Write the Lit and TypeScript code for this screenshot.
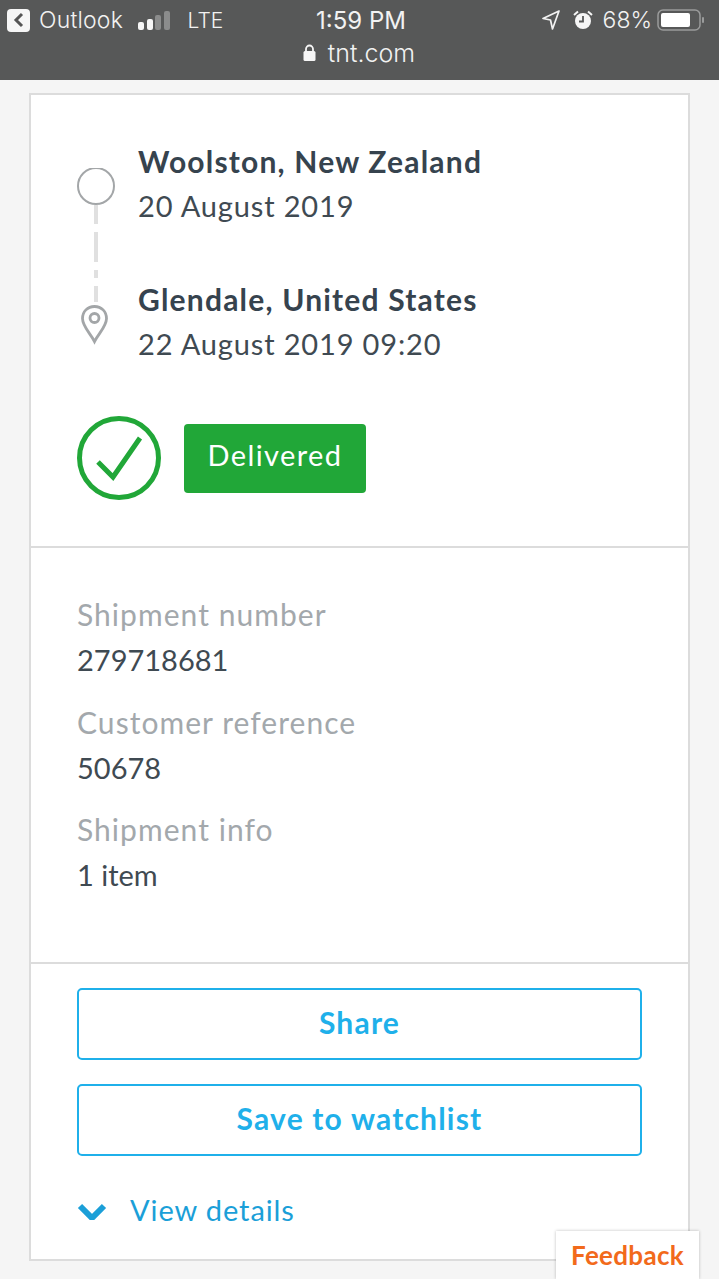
import { LitElement, html, css } from "lit";
import { customElement } from "lit/decorators.js";

@customElement("app-root")
export class AppRoot extends LitElement {
  static styles = css`
    :host { display: block; position: relative; width: 719px; height: 1279px; overflow: hidden; background: #f5f5f5; font-family: Lato, "Open Sans", sans-serif; color: #36434e; }
    * { box-sizing: border-box; }
    .top { height: 80px; background: #575858; color: #f2f2f2; padding: 0 7px; display: flex; flex-direction: column; }
    .status { height: 40px; display: flex; align-items: center; font-size: 23px; font-family: Inter, Lato, sans-serif; font-weight: 300; }
    .left, .right { display: flex; align-items: center; }
    .left { flex: 1; }
    .right { flex: 1; justify-content: flex-end; padding-right: 7px; }
    .back { width: 23px; height: 23px; background: #f6f6f6; border-radius: 4px; display: flex; align-items: center; justify-content: center; margin-right: 9px; }
    .app { font-size: 23px; letter-spacing: 0.2px; }
    .signal { display: flex; align-items: flex-end; gap: 2.5px; margin-left: 15px; height: 20px; }
    .signal i { display: block; width: 6px; border-radius: 2px; background: #f6f6f6; }
    .signal i.off { background: #8b8c8c; }
    .s1 { height: 8px; } .s2 { height: 11px; } .s3 { height: 15px; } .s4 { height: 19px; }
    .lte { margin-left: 18px; font-size: 21px; }
    .time { font-size: 24px; font-weight: 400; flex: none; margin-left: 10px; }
    .pct { font-size: 23px; margin: 0 5px 0 10px; }
    .alarm { margin-left: 13px; }
    .url { height: 24px; margin-top: 1px; display: flex; align-items: center; justify-content: center; gap: 12px; font-size: 25px; font-family: Inter, Lato, sans-serif; font-weight: 300; padding-right: 1px; }
    .card { position: absolute; left: 29px; top: 93px; width: 661px; height: 1168px; background: #fff; border: 2px solid #dcdcdc; display: flex; flex-direction: column; }
    .route { height: 453px; border-bottom: 2px solid #dcdcdc; padding: 46px 46px 0; }
    .stops { display: grid; grid-template-columns: 38px 1fr; grid-template-rows: 137.5px 1fr; column-gap: 23px; height: 277px; }
    .rail { display: flex; flex-direction: column; align-items: center; grid-row: span 2; width: 38px; padding-top: 27px; height: 277px; }
    .info { margin-top: -2px; }
    .place { font-size: 30px; font-weight: 700; line-height: 45px; letter-spacing: 1.2px; }
    .date { font-size: 29px; font-weight: 400; line-height: 44px; color: #3f4a52; letter-spacing: 0.85px; }
    .status-row { display: flex; align-items: center; gap: 23px; margin-top: -2px; }
    .badge { width: 182px; height: 69px; border-radius: 4px; background: #21a738; color: #fff; font-size: 29px; font-weight: 400; display: flex; align-items: center; justify-content: center; letter-spacing: 1.4px; padding-bottom: 8px; }
    .details { height: 416px; border-bottom: 2px solid #dcdcdc; padding: 43px 46px 0; }
    .label { font-size: 30px; line-height: 46px; color: #a3a8ac; letter-spacing: 1.05px; font-weight: 400; }
    .value { font-size: 29px; line-height: 46px; margin-bottom: 15.5px; color: #3f4a52; letter-spacing: 0; }
    .actions { flex: 1; padding: 24px 46px 0; display: flex; flex-direction: column; gap: 24px; }
    .btn { height: 72px; border: 2px solid #1fb0ea; border-radius: 5px; background: #fff; color: #1fb0ea; font-family: inherit; font-size: 30px; font-weight: 700; letter-spacing: 1.2px; display: flex; align-items: center; justify-content: center; padding-bottom: 6px; }
    .more { display: flex; align-items: center; gap: 23px; color: #1b9fd8; font-size: 29px; letter-spacing: 0.9px; margin-top: 12px; }
    .fb { position: absolute; left: 556px; top: 1231px; width: 143px; height: 48px; background: #fff; box-shadow: 0 0 3px rgba(0,0,0,0.25); color: #f26a1b; font-size: 26px; font-weight: 700; display: flex; align-items: center; justify-content: center; letter-spacing: 0.3px; }
  `;

  render() {
    return html`
      <div class="top">
        <div class="status">
          <div class="left">
            <span class="back"><svg width="12" height="16" viewBox="0 0 12 16"><path d="M9 2 3 8l6 6" fill="none" stroke="#555" stroke-width="3"/></svg></span>
            <span class="app">Outlook</span>
            <span class="signal"><i class="s1"></i><i class="s2"></i><i class="s3 off"></i><i class="s4 off"></i></span>
            <span class="lte">LTE</span>
          </div>
          <span class="time">1:59 PM</span>
          <div class="right">
            <svg width="18" height="20" viewBox="0 0 18 20"><path d="M17 1 1 8.500l7.500 1.500L10.500 19z" fill="none" stroke="#f2f2f2" stroke-width="1.700" stroke-linejoin="round"/></svg>
            <svg class="alarm" width="20" height="20" viewBox="0 0 20 20"><circle cx="10" cy="11" r="8" fill="#f6f6f6"/><path d="M10 6v5.500H6" fill="none" stroke="#575858" stroke-width="1.800"/><path d="M1 5 5 1.500M19 5l-4-3.500" stroke="#f6f6f6" stroke-width="2"/></svg>
            <span class="pct">68%</span>
            <svg width="48" height="22" viewBox="0 0 48 22"><rect x="1" y="1" width="42" height="20" rx="5" fill="none" stroke="#9a9b9b" stroke-width="1.500"/><rect x="4" y="4" width="29" height="14" rx="2" fill="#fff"/><rect x="45" y="8" width="2" height="6" rx="1" fill="#9a9b9b"/></svg>
          </div>
        </div>
        <div class="url">
          <svg width="13" height="18" viewBox="0 0 13 18"><rect x="0.500" y="7" width="12" height="10" rx="1.500" fill="#f6f6f6"/><path d="M3 8V5a3.500 3.500 0 0 1 7 0v3" fill="none" stroke="#f6f6f6" stroke-width="1.800"/></svg>
          <span>tnt.com</span>
        </div>
      </div>

      <div class="card">
        <section class="route">
          <div class="stops">
            <div class="rail">
              <svg width="38" height="178" viewBox="0 0 38 178">
                <circle cx="19" cy="18" r="18" fill="none" stroke="#a3a6a8" stroke-width="2"/>
                <path d="M19 37v19M19 64v30M19 102v8M19 118v16" stroke="#e0e0e0" stroke-width="4" fill="none"/>
                <path d="M17.500 138.500c-7 0-12 5-12 12 0 8 8 15 12 23 4-8 12-15 12-23 0-7-5-12-12-12z" fill="none" stroke="#a3a6a8" stroke-width="2.800"/>
                <circle cx="17.500" cy="150" r="4.500" fill="none" stroke="#a3a6a8" stroke-width="2.800"/>
              </svg>
            </div>
            <div class="info">
              <div class="place">Woolston, New Zealand</div>
              <div class="date">20 August 2019</div>
            </div>
            <div class="info">
              <div class="place">Glendale, United States</div>
              <div class="date">22 August 2019 09:20</div>
            </div>
          </div>
          <div class="status-row">
            <svg width="84" height="84" viewBox="0 0 84 84"><circle cx="42" cy="42" r="39.500" fill="none" stroke="#21a738" stroke-width="5"/><path d="M21 46l15 15 27-39" fill="none" stroke="#21a738" stroke-width="5"/></svg>
            <span class="badge">Delivered</span>
          </div>
        </section>
        <section class="details">
          <div class="label">Shipment number</div>
          <div class="value">279718681</div>
          <div class="label">Customer reference</div>
          <div class="value">50678</div>
          <div class="label">Shipment info</div>
          <div class="value">1 item</div>
        </section>
        <section class="actions">
          <button class="btn">Share</button>
          <button class="btn">Save to watchlist</button>
          <div class="more">
            <svg width="30" height="20" viewBox="0 -2 30 20"><path d="M3 4l12 12L27 4" fill="none" stroke="#1b9fd8" stroke-width="6"/></svg>
            <span>View details</span>
          </div>
        </section>
      </div>
      <div class="fb">Feedback</div>
    `;
  }
}
